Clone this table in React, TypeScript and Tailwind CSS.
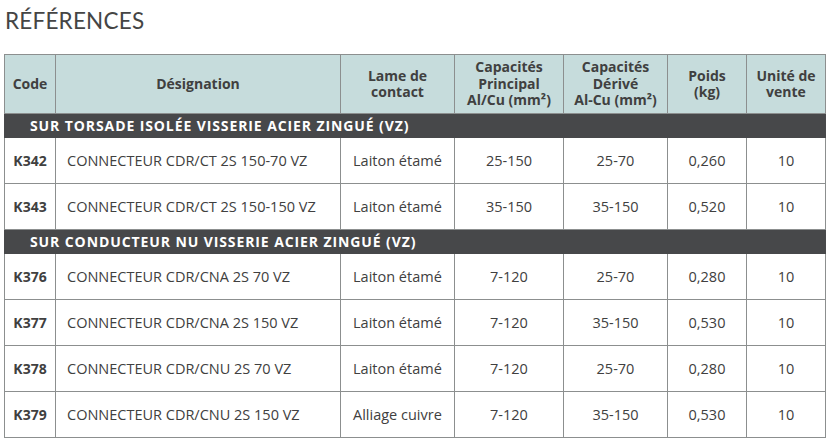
import React from 'react';

type Row = {
  code: string;
  designation: string;
  lame: string;
  principal: string;
  derive: string;
  poids: string;
  unite: string;
};

const SECTIONS: { title: string; rows: Row[] }[] = [
  {
    title: 'SUR TORSADE ISOLÉE VISSERIE ACIER ZINGUÉ (VZ)',
    rows: [
      { code: 'K342', designation: 'CONNECTEUR CDR/CT 2S 150-70 VZ', lame: 'Laiton étamé', principal: '25-150', derive: '25-70', poids: '0,260', unite: '10' },
      { code: 'K343', designation: 'CONNECTEUR CDR/CT 2S 150-150 VZ', lame: 'Laiton étamé', principal: '35-150', derive: '35-150', poids: '0,520', unite: '10' },
    ],
  },
  {
    title: 'SUR CONDUCTEUR NU VISSERIE ACIER ZINGUÉ (VZ)',
    rows: [
      { code: 'K376', designation: 'CONNECTEUR CDR/CNA 2S 70 VZ', lame: 'Laiton étamé', principal: '7-120', derive: '25-70', poids: '0,280', unite: '10' },
      { code: 'K377', designation: 'CONNECTEUR CDR/CNA 2S 150 VZ', lame: 'Laiton étamé', principal: '7-120', derive: '35-150', poids: '0,530', unite: '10' },
      { code: 'K378', designation: 'CONNECTEUR CDR/CNU 2S 70 VZ', lame: 'Laiton étamé', principal: '7-120', derive: '25-70', poids: '0,280', unite: '10' },
      { code: 'K379', designation: 'CONNECTEUR CDR/CNU 2S 150 VZ', lame: 'Alliage cuivre', principal: '7-120', derive: '35-150', poids: '0,530', unite: '10' },
    ],
  },
];

const th = 'border border-[#8c8f8f] font-bold text-[14px] text-center align-middle leading-[16.5px] px-1';
const td = 'border border-[#8c8f8f] align-middle whitespace-nowrap';

export default function App() {
  return (
    <div className="w-[829px] h-[446px] bg-white text-[#404040] font-['Open_Sans','Noto_Sans',sans-serif] overflow-hidden">
      <h1 className="pl-[5px] pt-[7px] h-[54px] text-[22.5px] leading-[28px] font-['Lato',sans-serif] tracking-[0.2px] text-[#454545]">
        RÉFÉRENCES
      </h1>

      <table className="ml-[4px] w-[821px] border-collapse table-fixed text-[14.5px]">
        <colgroup>
          <col className="w-[51px]" />
          <col className="w-[285px]" />
          <col className="w-[114px]" />
          <col className="w-[109px]" />
          <col className="w-[104px]" />
          <col className="w-[79px]" />
          <col className="w-[79px]" />
        </colgroup>
        <thead>
          <tr className="h-[59px] bg-[#c6dcdc]">
            <th className={th}>Code</th>
            <th className={th}>Désignation</th>
            <th className={th}>Lame de<br />contact</th>
            <th className={th}>Capacités<br />Principal<br />Al/Cu (mm²)</th>
            <th className={th}>Capacités<br />Dérivé<br />Al-Cu (mm²)</th>
            <th className={th}>Poids<br />(kg)</th>
            <th className={th}>Unité de<br />vente</th>
          </tr>
        </thead>
        <tbody>
          {SECTIONS.map((section) => (
            <React.Fragment key={section.title}>
              <tr className="h-[24px] bg-[#47484a]">
                <td colSpan={7} className="border border-[#47484a] pl-[25px] text-left text-white text-[14px] font-bold tracking-[0.9px] leading-none">
                  {section.title}
                </td>
              </tr>
              {section.rows.map((r) => (
                <tr key={r.code} className="h-[46px]">
                  <td className={`${td} text-center font-bold text-[14px]`}>{r.code}</td>
                  <td className={`${td} pl-[11px]`}>{r.designation}</td>
                  <td className={`${td} pl-[12px]`}>{r.lame}</td>
                  <td className={`${td} text-center`}>{r.principal}</td>
                  <td className={`${td} text-center`}>{r.derive}</td>
                  <td className={`${td} text-center`}>{r.poids}</td>
                  <td className={`${td} text-center`}>{r.unite}</td>
                </tr>
              ))}
            </React.Fragment>
          ))}
        </tbody>
      </table>
    </div>
  );
}
